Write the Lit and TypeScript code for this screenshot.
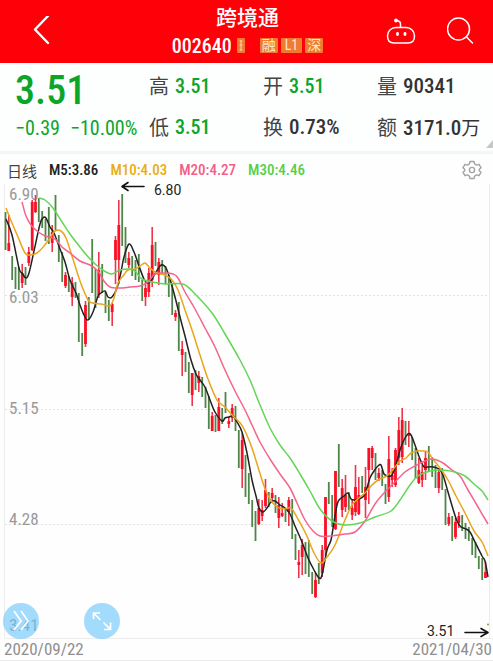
import { LitElement, html, svg, css } from "lit";
import { customElement } from "lit/decorators.js";

type Point = [number, number];
/* high, low, body top, body bottom; one entry per trading day */
type Candle = ["r" | "g", number, number, number?, number?];

const CANDLES: Candle[] = [
  ["g", 212, 250], ["r", 215, 251, 243, 251], ["g", 256, 280], ["g", 267, 289], ["g", 267, 290],
  ["r", 264, 288, 273, 283], ["g", 267, 285], ["r", 247, 266, 252, 263], ["r", 200, 251, 202, 250], ["r", 195, 213, 202, 212],
  ["g", 198, 222], ["g", 211, 228], ["g", 219, 241], ["g", 207, 244], ["r", 225, 252, 232, 243],
  ["g", 195, 230], ["g", 235, 262], ["g", 252, 282], ["r", 272, 288, 275, 286], ["g", 276, 292],
  ["r", 277, 306, 283, 297], ["g", 282, 298], ["g", 293, 342], ["g", 333, 356], ["r", 301, 347, 305, 344],
  ["g", 297, 320], ["g", 239, 293], ["g", 269, 308], ["r", 252, 298, 270, 295], ["g", 264, 293],
  ["g", 292, 313], ["g", 300, 321], ["r", 303, 326, 304, 312], ["r", 236, 284, 240, 260], ["r", 200, 284, 225, 260],
  ["g", 194, 246], ["g", 227, 263], ["r", 252, 268, 258, 265], ["g", 256, 276], ["g", 260, 280],
  ["g", 254, 282], ["g", 280, 301], ["r", 282, 306, 288, 297], ["r", 268, 297, 273, 292], ["r", 227, 287, 245, 280],
  ["g", 242, 266], ["r", 258, 285, 262, 275], ["g", 260, 273], ["g", 266, 284], ["g", 275, 297],
  ["g", 283, 315], ["r", 310, 321, 313, 317], ["g", 302, 351], ["r", 341, 376, 349, 355], ["g", 352, 372],
  ["g", 362, 393], ["r", 373, 406, 373, 395], ["g", 370, 390], ["r", 371, 392, 376, 383], ["g", 377, 397],
  ["g", 387, 408], ["g", 396, 429], ["r", 412, 431, 416, 431], ["g", 415, 432], ["r", 398, 431, 407, 431],
  ["g", 408, 424], ["g", 392, 413], ["r", 417, 428, 421, 424], ["r", 404, 422, 408, 418], ["g", 406, 431],
  ["g", 430, 468], ["r", 433, 488, 440, 469], ["g", 455, 497], ["g", 473, 504], ["g", 500, 527],
  ["g", 511, 541], ["r", 499, 525, 508, 524], ["r", 500, 521, 510, 516], ["r", 479, 508, 490, 506], ["g", 492, 507],
  ["r", 488, 503, 493, 498], ["g", 495, 513], ["r", 497, 528, 505, 518], ["r", 503, 517, 513, 516], ["g", 508, 522],
  ["r", 497, 526, 500, 512], ["g", 499, 539], ["g", 534, 560], ["r", 550, 578, 562, 565], ["r", 539, 575, 545, 557],
  ["g", 542, 574], ["g", 540, 577], ["g", 572, 594], ["r", 573, 598, 580, 597], ["g", 563, 584],
  ["r", 545, 577, 550, 573], ["r", 497, 556, 497, 550], ["g", 482, 504], ["g", 495, 527], ["r", 471, 530, 471, 529],
  ["g", 444, 487], ["r", 479, 517, 488, 510], ["r", 475, 512, 495, 507], ["g", 492, 510], ["r", 500, 520, 508, 515],
  ["r", 465, 516, 487, 512], ["r", 477, 515, 495, 514], ["g", 476, 493], ["r", 467, 518, 487, 500], ["r", 448, 504, 448, 470],
  ["r", 446, 470, 448, 458], ["g", 453, 480], ["r", 468, 481, 473, 478], ["g", 470, 486], ["g", 484, 504],
  ["r", 436, 502, 459, 497], ["r", 468, 487, 475, 480], ["r", 448, 487, 450, 485], ["r", 417, 465, 430, 458], ["r", 408, 463, 420, 457],
  ["g", 421, 445], ["r", 421, 447, 433, 436], ["g", 437, 460], ["g", 448, 479], ["r", 458, 484, 470, 483],
  ["r", 465, 487, 472, 480], ["r", 451, 480, 458, 470], ["g", 446, 472], ["g", 457, 477], ["g", 465, 488],
  ["r", 468, 493, 472, 488], ["g", 468, 490], ["g", 489, 525], ["r", 513, 526, 517, 524], ["g", 516, 541],
  ["r", 518, 539, 522, 537], ["r", 512, 528, 516, 523], ["g", 515, 531], ["g", 523, 539], ["g", 527, 541],
  ["g", 538, 555], ["g", 542, 558], ["g", 556, 569], ["g", 558, 580], ["r", 562, 578, 572, 578],
];

const M5: Point[] = [
  [6, 219], [12, 235], [19, 268], [22, 273], [26, 278], [29, 273], [34, 251], [40, 224], [43, 218], [46, 218], [50, 227],
  [54, 233], [60, 249], [65, 262], [70, 280], [76, 293], [80, 305], [84, 315], [88, 320], [93, 312], [98, 296], [101, 293],
  [105, 291], [108, 297], [112, 297], [117, 288], [121, 272], [124, 257], [129, 244], [134, 252], [139, 266], [144, 279],
  [148, 283], [152, 279], [156, 272], [160, 266], [163, 265], [166, 268], [170, 279], [175, 297], [180, 317], [185, 336],
  [191, 360], [196, 374], [200, 380], [205, 387], [210, 400], [215, 412], [222, 421], [225, 418], [229, 417], [233, 416],
  [237, 422], [242, 432], [247, 453], [252, 480], [256, 496], [259, 508], [263, 512], [267, 508], [271, 502], [275, 501],
  [280, 505], [285, 508], [290, 514], [295, 526], [302, 542], [308, 558], [314, 570], [319, 578], [322, 575], [327, 550],
  [331, 540], [334, 522], [337, 505], [339, 500], [344, 496], [348, 493], [351, 499], [355, 500], [361, 498], [365, 494],
  [370, 478], [374, 471], [378, 466], [381, 465], [384, 474], [388, 476], [392, 475], [396, 465], [400, 450], [404, 440],
  [408, 434], [411, 435], [415, 445], [420, 459], [424, 467], [427, 467], [433, 467], [439, 469], [443, 475], [448, 492],
  [453, 509], [457, 521], [461, 527], [466, 529], [470, 532], [475, 542], [482, 556], [485, 561], [488, 577],
];
const M10: Point[] = [
  [6, 208], [12, 223], [18, 237], [25, 253], [30, 255], [37, 253], [44, 246], [50, 238], [55, 231], [61, 231], [66, 238],
  [72, 256], [80, 281], [88, 300], [93, 303], [101, 304], [105, 305], [110, 306], [114, 298], [118, 283], [123, 276],
  [128, 270], [135, 269], [140, 266], [145, 263], [150, 268], [157, 273], [165, 275], [172, 280], [178, 290], [185, 310],
  [192, 330], [200, 355], [208, 379], [217, 400], [225, 407], [233, 416], [241, 424], [246, 433], [252, 448], [258, 467],
  [264, 486], [270, 499], [277, 507], [285, 509], [291, 508], [298, 519], [306, 534], [314, 553], [321, 563], [327, 557],
  [335, 545], [345, 520], [352, 505], [359, 498], [365, 493], [371, 486], [378, 480], [385, 477], [390, 473], [395, 467],
  [400, 461], [406, 458], [411, 453], [417, 451], [422, 451], [428, 452], [432, 458], [440, 468], [448, 480], [456, 496],
  [465, 513], [474, 531], [482, 542], [488, 556],
];
const M20: Point[] = [
  [22, 202], [26, 216], [31, 225], [37, 231], [45, 236], [55, 239], [62, 247], [70, 253], [80, 261], [90, 265], [98, 271],
  [104, 281], [110, 287], [120, 288], [130, 287], [140, 286], [148, 282], [155, 274], [165, 273], [173, 274], [178, 278],
  [185, 292], [195, 309], [205, 328], [215, 347], [225, 370], [235, 391], [245, 410], [252, 425], [260, 442], [270, 459],
  [280, 474], [290, 488], [297, 503], [305, 520], [313, 531], [320, 536], [330, 536], [345, 534], [355, 532], [365, 521],
  [375, 504], [385, 492], [395, 482], [405, 472], [415, 466], [425, 461], [433, 459], [443, 463], [452, 470], [460, 476],
  [468, 490], [478, 507], [488, 524],
];
const M30: Point[] = [
  [39, 198], [45, 200], [53, 208], [62, 222], [70, 234], [80, 247], [90, 259], [100, 268], [111, 274], [120, 270],
  [130, 269], [135, 271], [142, 279], [152, 282], [165, 284], [183, 284], [195, 294], [212, 313], [225, 334], [240, 360],
  [250, 380], [260, 405], [270, 428], [280, 445], [290, 458], [300, 474], [310, 491], [320, 509], [332, 521], [345, 525],
  [360, 523], [375, 517], [391, 511], [400, 500], [410, 485], [418, 476], [430, 471], [442, 470], [455, 472], [465, 476],
  [475, 485], [482, 491], [488, 500],
];

/* Smooth path through the points (Catmull-Rom converted to Béziers). */
function smooth(points: Point[]): string {
  let d = `M${points[0][0]} ${points[0][1]}`;
  for (let i = 0; i < points.length - 1; i++) {
    const p0 = points[Math.max(0, i - 1)];
    const p1 = points[i];
    const p2 = points[i + 1];
    const p3 = points[Math.min(points.length - 1, i + 2)];
    const n = (v: number) => v.toFixed(2);
    d += `C${n(p1[0] + (p2[0] - p0[0]) / 6)} ${n(p1[1] + (p2[1] - p0[1]) / 6)} ${n(p2[0] - (p3[0] - p1[0]) / 6)} ${n(p2[1] - (p3[1] - p1[1]) / 6)} ${p2[0]} ${p2[1]}`;
  }
  return d;
}

@customElement("stock-header")
export class StockHeader extends LitElement {
  static styles = css`
    :host { display: block; background: #fe0008; color: #fff; }
    .bar { display: grid; grid-template-columns: 1fr auto 1fr; align-items: center; height: 63px; padding: 0 17px 0 19px; }
    button { appearance: none; border: 0; padding: 0; background: none; color: inherit; display: block; }
    .back { padding-left: 6px; }
    svg { display: block; fill: none; stroke: currentColor; stroke-linecap: round; stroke-linejoin: round; }
    .actions { display: flex; justify-content: flex-end; gap: 30px; }
    .center { display: flex; flex-direction: column; align-items: center; }
    h1 { margin: 0; font-size: 21px; line-height: 28px; font-weight: 500; }
    .sub { display: flex; align-items: center; height: 28px; }
    .code { font-size: 20px; line-height: 28px; font-weight: 500; margin-right: 5px; }
    .tags { display: flex; gap: 3px; margin-left: 15px; }
    .tag { background: #ee7b30; color: #ffe6cf; font-size: 14px; line-height: 15px; height: 15px; padding: 0 2px; border-radius: 1px; }
    .latin { padding: 0 4px; }
    .clip { width: 8px; height: 15px; border-radius: 1px; background: #ee7b30; }
    .clip svg { stroke: #ffd9b0; }
  `;
  render() {
    return html`<header class="bar">
      <button class="back" aria-label="返回">
        <svg width="32" height="32" viewBox="0 0 32 32" stroke-width="2.4"><path d="M23 0 10 13.500 23 27" /></svg>
      </button>
      <div class="center">
        <h1>跨境通</h1>
        <div class="sub">
          <span class="code">002640</span>
          <span class="clip"><svg width="8" height="15" viewBox="0 0 8 15"><path d="M3 3h2M4 3v9M3 7h2M3 12h2" /></svg></span>
          <span class="tags"><span class="tag">融</span><span class="tag latin">L1</span><span class="tag">深</span></span>
        </div>
      </div>
      <div class="actions">
        <button aria-label="智能助手">
          <svg width="32" height="30" viewBox="0 0 32 30" stroke-width="1.5">
            <path d="M11 10.500h10c5 0 8.500 4 8.500 8.500 0 4-2 7-6.500 7H9c-4.500 0-6.500-3-6.500-7 0-4.500 3.500-8.500 8.500-8.500Z" />
            <path d="M15.500 10V7q0-3-4-3.500" /><circle cx="11" cy="3.500" r="1.200" fill="currentColor" />
            <path d="M12.500 16.500v1M20 16.500v1" stroke-width="2.800" />
          </svg>
        </button>
        <button aria-label="搜索">
          <svg width="29" height="30" viewBox="0 0 29 30" stroke-width="1.5">
            <circle cx="11.500" cy="12" r="11" /><path d="m19.500 20 6 6" />
          </svg>
        </button>
      </div>
    </header>`;
  }
}

@customElement("stock-quote")
export class StockQuote extends LitElement {
  static styles = css`
    :host { display: block; background: #fdfffe; border-bottom: 3px solid #f4f5f5; }
    .quote { position: relative; display: grid; grid-template-columns: 134fr 114fr 114fr 116fr; padding: 2px 0 4px 15px; }
    dl, dd { margin: 0; }
    dl { display: contents; }
    .summary { grid-row: 1 / 3; }
    .price { font-size: 40px; line-height: 52px; font-weight: 500; color: #0ba52a; }
    .change { display: flex; gap: 10px; font-size: 20px; line-height: 22px; color: #0ba52a; white-space: nowrap; }
    .cell { display: flex; align-items: center; gap: 6px; height: 41px; font-size: 21px; white-space: nowrap; }
    dt { font-size: 20px; color: #444; }
    dd { font-weight: 500; color: #333; }
    .down { color: #0ba52a; font-size: 20px; }
    .wan { font-size: 19px; font-weight: 400; }
    .more { position: absolute; right: 0; bottom: 3px; display: block; fill: #c6c8c8; }
  `;
  render() {
    return html`<section class="quote">
      <div class="summary">
        <div class="price">3.51</div>
        <div class="change"><span>−0.39</span><span>−10.00%</span></div>
      </div>
      <dl>
        <div class="cell"><dt>高</dt><dd class="down">3.51</dd></div>
        <div class="cell"><dt>开</dt><dd class="down">3.51</dd></div>
        <div class="cell"><dt>量</dt><dd>90341</dd></div>
        <div class="cell"><dt>低</dt><dd class="down">3.51</dd></div>
        <div class="cell"><dt>换</dt><dd>0.73%</dd></div>
        <div class="cell"><dt>额</dt><dd>3171.0<span class="wan">万</span></dd></div>
      </dl>
      <svg class="more" width="7" height="8" viewBox="0 0 7 8"><path d="M7 0v8H0z" /></svg>
    </section>`;
  }
}

@customElement("kline-chart")
export class KlineChart extends LitElement {
  static styles = css`
    :host { display: block; background: #fdfefd; }
    .legend { display: flex; align-items: center; gap: 12px; height: 28px; padding: 2px 11px 0 7px; font-size: 15px; font-weight: 500; white-space: nowrap; }
    .period { font-weight: 400; color: #444; }
    .m5 { color: #222; }
    .m10 { color: #e9ad12; }
    .m20 { color: #f45d88; }
    .m30 { color: #55cf48; }
    button { appearance: none; border: 0; padding: 0; display: block; background: none; }
    .settings { margin-left: auto; color: #a3a3a3; }
    .settings svg { display: block; fill: none; stroke: currentColor; stroke-width: 1.4; stroke-linejoin: round; }
    .plot { position: relative; }
    .chart { display: block; width: 100%; height: auto; overflow: visible; }
    .frame { stroke: #ececec; fill: none; }
    .grid { stroke: #e2e5e3; stroke-dasharray: 2 2; }
    .axis { font-size: 17px; fill: #999; }
    .note { font-family: Roboto, sans-serif; font-size: 14px; fill: #222; }
    .arrow { fill: none; stroke: #111; stroke-width: 1.6; stroke-linecap: round; stroke-linejoin: round; }
    .wick-r { stroke: #f0354a; stroke-width: 1.6; }
    .body-r { stroke: #fb0f26; stroke-width: 2.8; }
    .body-g { stroke: #4f8548; stroke-width: 1.8; }
    .line { fill: none; stroke-width: 1.5; }
    .l5 { stroke: #222; }
    .l10 { stroke: #eaa51c; }
    .l20 { stroke: #f4648c; }
    .l30 { stroke: #63d556; }
    .tools { position: absolute; left: 3px; bottom: 0; display: flex; gap: 45px; }
    .round { width: 36px; height: 36px; border-radius: 50%; background: rgba(103, 195, 253, 0.6); }
    .round svg { display: block; fill: none; stroke: #fff; stroke-width: 1.7; }
    .dates { display: flex; justify-content: space-between; padding: 0 1px 0 4px; font-size: 17px; line-height: 21px; color: #8f8f8f; border-bottom: 1px solid #ececec; }
  `;

  private candle([kind, high, low, top, bottom]: Candle, i: number) {
    const x = (5.5 + (i * 10) / 3).toFixed(1);
    return kind === "g"
      ? svg`<path class="body-g" d="M${x} ${high}V${low}" />`
      : svg`<path class="wick-r" d="M${x} ${high}V${low}" /><path class="body-r" d="M${x} ${top}V${bottom}" />`;
  }

  render() {
    return html`<section>
      <div class="legend">
        <span class="period">日线</span>
        <span class="m5">M5:3.86</span>
        <span class="m10">M10:4.03</span>
        <span class="m20">M20:4.27</span>
        <span class="m30">M30:4.46</span>
        <button class="settings" aria-label="设置">
          <svg width="20" height="20" viewBox="0 0 20 20">
            <path d="M8 1.500h4l.6 2.400 2 1.200 2.400-.8 2 3.400-1.700 1.600v1.400l1.700 1.600-2 3.400-2.400-.8-2 1.200-.6 2.400H8l-.6-2.400-2-1.200-2.400.8-2-3.400 1.700-1.600V9.300L1 7.700l2-3.400 2.400.8 2-1.200Z" />
            <circle cx="10" cy="10" r="2.600" />
          </svg>
        </button>
      </div>
      <div class="plot">
        <svg class="chart" viewBox="0 184 493 455" role="img" aria-label="日线走势图">
          <path class="frame" d="M4.500 184V638.500H493M489.500 184V638" />
          <path class="grid" d="M5 295.500H489M5 409.500H489M5 524.500H489" />
          <text class="axis" x="9" y="200">6.90</text>
          <text class="axis" x="9" y="303">6.03</text>
          <text class="axis" x="9" y="414">5.15</text>
          <text class="axis" x="9" y="525">4.28</text>
          <text class="axis" x="9" y="631">3.41</text>
          ${CANDLES.map((c, i) => this.candle(c, i))}
          <path class="line l5" d=${smooth(M5)} />
          <path class="line l10" d=${smooth(M10)} />
          <path class="line l20" d=${smooth(M20)} />
          <path class="line l30" d=${smooth(M30)} />
          <path class="arrow" d="M144 186.500H122M128 182.500l-6 4 6 4" />
          <text class="note" x="154" y="195">6.80</text>
          <text class="note" x="427" y="636">3.51</text>
          <path class="arrow" d="M465 632.500H488M481 628.500l7 4-7 4" />
          <circle cx="488" cy="624.500" r="1" fill="#8a9a50" />
        </svg>
        <div class="tools">
          <button class="round" aria-label="展开">
            <svg width="36" height="36" viewBox="0 0 36 36"><path d="m11 8 7 10-7 9M18 8l7 10-7 9" /></svg>
          </button>
          <button class="round" aria-label="全屏">
            <svg width="36" height="36" viewBox="0 0 36 36"><path d="M16.500 17 10 10.500M9.500 16v-6H16M19.500 19.500 26 26M26.500 19.500v7H20" /></svg>
          </button>
        </div>
      </div>
      <div class="dates"><time>2020/09/22</time><time>2021/04/30</time></div>
    </section>`;
  }
}

@customElement("app-root")
export class AppRoot extends LitElement {
  static styles = css`
    :host { display: block; background: #fff; font-family: "Roboto Condensed", Roboto, "Noto Sans CJK SC", sans-serif; }
  `;
  render() {
    return html`<main><stock-header></stock-header><stock-quote></stock-quote><kline-chart></kline-chart></main>`;
  }
}
